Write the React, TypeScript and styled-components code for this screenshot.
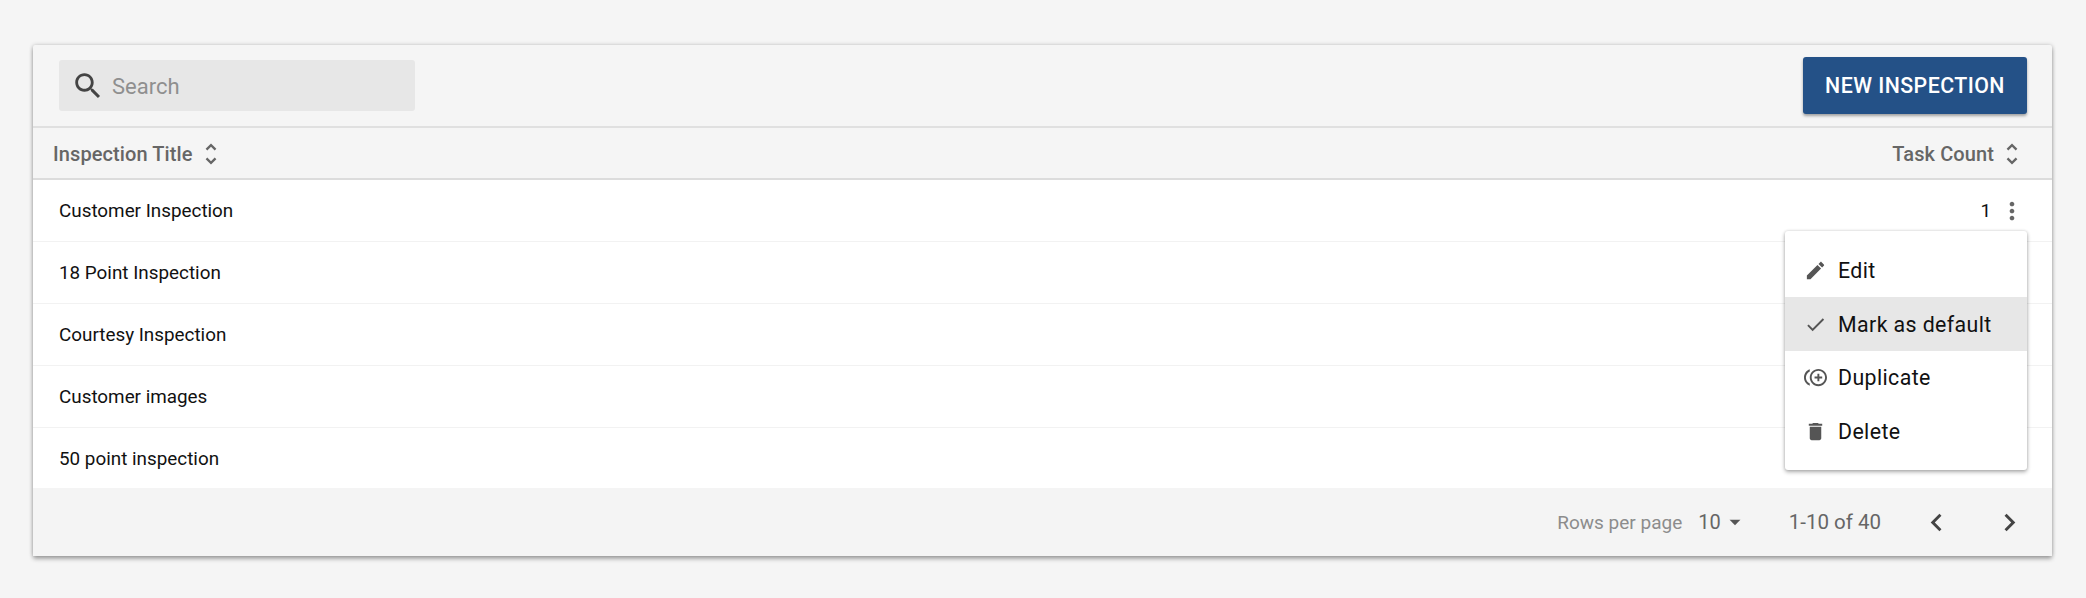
import React from "react";
import styled, { createGlobalStyle } from "styled-components";

const Global = createGlobalStyle`
  html, body { margin: 0; padding: 0; background: #f5f5f5; }
  body { font-family: Roboto, "Liberation Sans", sans-serif; -webkit-font-smoothing: antialiased; }
`;

const Page = styled.div`
  box-sizing: border-box;
  width: 2086px;
  height: 598px;
  padding: 45px 34px 0 33px;
`;
const Card = styled.div`
  position: relative;
  height: 511px;
  display: flex;
  flex-direction: column;
  background: #f5f5f5;
  border-radius: 2px;
  box-shadow: 0 3px 4px rgba(0, 0, 0, 0.3), 0 0 4px rgba(0, 0, 0, 0.2);
`;
const Toolbar = styled.div`
  box-sizing: border-box;
  height: 83px;
  display: flex;
  align-items: center;
  justify-content: space-between;
  padding: 0 25px 0 26px;
  border-bottom: 2px solid #e0e0e0;
`;
const SearchBox = styled.div`
  box-sizing: border-box;
  width: 356px;
  height: 51px;
  display: flex;
  align-items: center;
  gap: 7px;
  padding-left: 12px;
  background: #e7e7e7;
  border-radius: 3px;
`;
const SearchText = styled.span`
  font-size: 22px;
  padding-top: 1px;
  color: #8f8f8f;
`;
const PrimaryButton = styled.button`
  box-sizing: border-box;
  width: 224px;
  height: 57px;
  border: 0;
  border-radius: 3px;
  background: #245187;
  color: #fff;
  font-family: inherit;
  font-size: 21.33px;
  font-weight: 500;
  letter-spacing: 0.45px;
  box-shadow: 0 2px 3px rgba(0, 0, 0, 0.35);
`;
const HeaderRow = styled.div`
  box-sizing: border-box;
  height: 52px;
  display: flex;
  align-items: center;
  justify-content: space-between;
  padding: 1px 26px 0 20px;
  border-bottom: 2px solid #dcdcdc;
`;
const HeaderCell = styled.div`
  display: flex;
  align-items: center;
  gap: 4px;
  font-size: 20px;
  font-weight: 500;
  letter-spacing: 0.1px;
  color: #666;
`;
const Rows = styled.div`
  background: #fff;
  height: 308px;
  flex: none;
`;
const Row = styled.div`
  box-sizing: border-box;
  height: 62px;
  display: flex;
  align-items: center;
  justify-content: space-between;
  padding: 0 26px;
  font-size: 18.85px;
  color: #111;
  border-bottom: 1px solid #f2f2f2;
  &:last-child { border-bottom: 0; height: 60px; padding-top: 2px; }
`;
const CountCell = styled.div`
  display: flex;
  align-items: center;
  gap: 7px;
`;
const Footer = styled.div`
  flex: 1;
  display: flex;
  align-items: center;
  justify-content: flex-end;
  padding-right: 25px;
  background: #f4f4f4;
  color: #666;
`;
const RowsLabel = styled.span`
  font-size: 19px;
  color: #8c8c8c;
  margin-right: 16px;
`;
const RowsValue = styled.span`
  font-size: 20px;
  color: #666;
  margin-right: 1px;
`;
const RangeLabel = styled.span`
  font-size: 20.5px;
  color: #666;
  margin: 0 38px 0 41px;
`;
const PagerButton = styled.span<{ $gap?: number }>`
  display: inline-flex;
  margin-left: ${(p) => p.$gap ?? 0}px;
`;
const Menu = styled.div`
  position: absolute;
  top: 186px;
  right: 25px;
  width: 242px;
  box-sizing: border-box;
  padding: 12px 0;
  background: #fff;
  border-radius: 3px;
  box-shadow: 0 2px 4px rgba(0, 0, 0, 0.32), 0 0 3px rgba(0, 0, 0, 0.14);
`;
const MenuItem = styled.div<{ $active?: boolean }>`
  box-sizing: border-box;
  height: 53.75px;
  display: flex;
  align-items: center;
  padding: 1px 0 0 19px;
  gap: 11px;
  font-size: 21.33px;
  letter-spacing: 0.4px;
  color: #111;
  background: ${(p) => (p.$active ? "#e7e7e7" : "transparent")};
`;
const IconSlot = styled.svg<{ $size?: number; $color?: string }>`
  width: ${(p) => p.$size ?? 24}px;
  height: ${(p) => p.$size ?? 24}px;
  fill: ${(p) => p.$color ?? "#555"};
  flex: none;
`;

const Icon = ({ d, size, color }: { d: string; size?: number; color?: string }) => (
  <IconSlot viewBox="0 0 24 24" $size={size} $color={color}>
    <path d={d} />
  </IconSlot>
);

const P = {
  search:
    "M15.5 14h-.79l-.28-.27C15.41 12.59 16 11.11 16 9.5 16 5.91 13.09 3 9.5 3S3 5.91 3 9.5 5.91 16 9.5 16c1.61 0 3.09-.59 4.23-1.57l.27.28v.79l5 4.99L20.49 19l-4.99-5zm-6 0C7.01 14 5 11.99 5 9.5S7.01 5 9.5 5 14 7.01 14 9.5 11.99 14 9.5 14z",
  unfold:
    "M12 5.83L15.17 9l1.41-1.41L12 3 7.41 7.59 8.83 9 12 5.83zm0 12.34L8.83 15l-1.41 1.41L12 21l4.59-4.59L15.17 15 12 18.17z",
  more:
    "M12 8c1.1 0 2-.9 2-2s-.9-2-2-2-2 .9-2 2 .9 2 2 2zm0 2c-1.1 0-2 .9-2 2s.9 2 2 2 2-.9 2-2-.9-2-2-2zm0 6c-1.1 0-2 .9-2 2s.9 2 2 2 2-.9 2-2-.9-2-2-2z",
  edit:
    "M3 17.25V21h3.75L17.81 9.94l-3.75-3.75L3 17.25zM20.71 7.04c.39-.39.39-1.02 0-1.41l-2.34-2.34c-.39-.39-1.02-.39-1.41 0l-1.83 1.83 3.75 3.75 1.83-1.83z",
  check: "M9 16.17L4.83 12l-1.42 1.41L9 19 21 7l-1.41-1.41z",
  dup:
    "M16 8h-2v3h-3v2h3v3h2v-3h3v-2h-3zM2 12c0-2.79 1.64-5.2 4.01-6.32V3.52C2.52 4.76 0 8.09 0 12s2.52 7.24 6.01 8.48v-2.16C3.64 17.2 2 14.79 2 12zm13-9c-4.96 0-9 4.04-9 9s4.04 9 9 9 9-4.04 9-9-4.04-9-9-9zm0 16c-3.86 0-7-3.14-7-7s3.14-7 7-7 7 3.14 7 7-3.14 7-7 7z",
  del: "M6 19c0 1.1.9 2 2 2h8c1.1 0 2-.9 2-2V7H6v12zM19 4h-3.5l-1-1h-5l-1 1H5v2h14V4z",
  drop: "M7 10l5 5 5-5z",
  left: "M15.41 7.41L14 6l-6 6 6 6 1.41-1.41L10.83 12z",
  right: "M10 6L8.59 7.41 13.17 12l-4.58 4.59L10 18l6-6z",
};

const titles = ["Customer Inspection", "18 Point Inspection", "Courtesy Inspection", "Customer images", "50 point inspection"];

export default function App() {
  return (
    <Page>
      <Global />
      <Card>
        <Toolbar>
          <SearchBox>
            <Icon d={P.search} size={34} color="#444" />
            <SearchText>Search</SearchText>
          </SearchBox>
          <PrimaryButton>NEW INSPECTION</PrimaryButton>
        </Toolbar>
        <HeaderRow>
          <HeaderCell>
            Inspection Title
            <Icon d={P.unfold} size={28} color="#666" />
          </HeaderCell>
          <HeaderCell>
            Task Count
            <Icon d={P.unfold} size={28} color="#666" />
          </HeaderCell>
        </HeaderRow>
        <Rows>
          {titles.map((t, i) => (
            <Row key={t}>
              {t}
              {i === 0 && (
                <CountCell>
                  1
                  <Icon d={P.more} size={28} color="#666" />
                </CountCell>
              )}
            </Row>
          ))}
        </Rows>
        <Footer>
          <RowsLabel>Rows per page</RowsLabel>
          <RowsValue>10</RowsValue>
          <Icon d={P.drop} size={26} color="#555" />
          <RangeLabel>1-10 of 40</RangeLabel>
          <PagerButton>
            <Icon d={P.left} size={35} color="#444" />
          </PagerButton>
          <PagerButton $gap={38}>
            <Icon d={P.right} size={35} color="#444" />
          </PagerButton>
        </Footer>
        <Menu>
          <MenuItem>
            <Icon d={P.edit} size={23} color="#555" />
            Edit
          </MenuItem>
          <MenuItem $active>
            <Icon d={P.check} size={23} color="#555" />
            Mark as default
          </MenuItem>
          <MenuItem>
            <Icon d={P.dup} size={23} color="#555" />
            Duplicate
          </MenuItem>
          <MenuItem>
            <Icon d={P.del} size={23} color="#555" />
            Delete
          </MenuItem>
        </Menu>
      </Card>
    </Page>
  );
}
